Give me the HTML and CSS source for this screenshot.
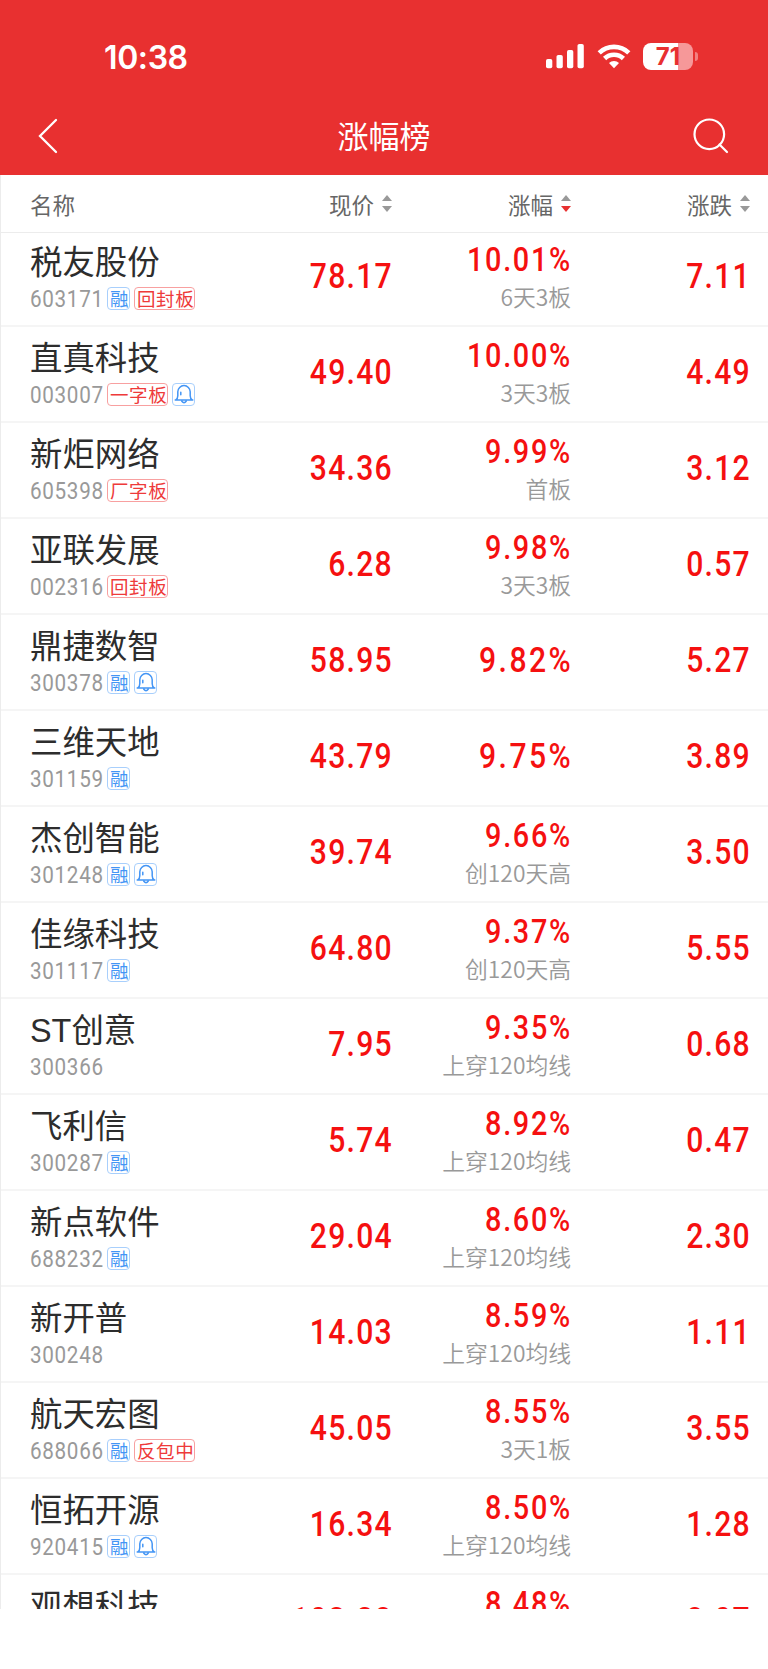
FILE: index.html
```
<!DOCTYPE html>
<html lang="zh-CN">
<head>
<meta charset="UTF-8">
<meta name="viewport" content="width=device-width, initial-scale=1.0">
<title>涨幅榜</title>
<link rel="stylesheet" href="styles.css">
</head>
<body>

<!-- Bell icon shared by the rows -->
<svg class="defs" width="0" height="0">
    <symbol id="bell" viewBox="0 0 20 20">
        <path d="M1.200 16h17.600M1.800 15.800c1.300-.8 2-2 2-4V7.800a6.200 6.200 0 0 1 12.400 0v4c0 2 .7 3.200 2 4M7.800 17.300q2.200 2.800 4.400 0M6.800 8.200v2.600" fill="none" stroke="currentColor" stroke-width="1.500" stroke-linecap="round"/>
    </symbol>
</svg>

<header>
    <div class="status-bar">
        <span class="time">10:38</span>
        <div class="status-icons">
            <svg class="signal" width="38" height="25" viewBox="0 0 38 25" fill="#fff">
                <rect x="0" y="15" width="6.300" height="9.300" rx="1.800"/>
                <rect x="10.500" y="11" width="6.300" height="13.300" rx="1.800"/>
                <rect x="21" y="6" width="6.300" height="18.300" rx="1.800"/>
                <rect x="31.500" y="0" width="6.300" height="24.300" rx="1.800"/>
            </svg>
            <svg class="wifi" width="34" height="25" viewBox="0 0 34 25" fill="none" stroke="#fff" stroke-width="4.600">
                <path d="M2.200 8.900a21.300 21.300 0 0 1 29.600 0"/>
                <path d="M7.600 14.500a13.500 13.500 0 0 1 18.800 0"/>
                <path d="M17 24.300l-5-5.200a7.200 7.200 0 0 1 10 0z" fill="#fff" stroke="none"/>
            </svg>
            <div class="battery"><span>71</span></div>
        </div>
    </div>
    <div class="title-bar">
        <svg width="20" height="36" viewBox="0 0 20 36" fill="none" stroke="#fff" stroke-width="2.300" stroke-linecap="round">
            <path d="M18 2L2 18l16 16"/>
        </svg>
        <h1>涨幅榜</h1>
        <svg width="36" height="36" viewBox="0 0 36 36" fill="none" stroke="#fff" stroke-width="2.200" stroke-linecap="round">
            <circle cx="16.300" cy="16.300" r="14.800"/>
            <path d="M26.500 26.500l7.500 7.500"/>
        </svg>
    </div>
</header>

<main class="board">
    <div class="board-head">
        <span>名称</span>
        <span class="sort">现价<i class="arrows"></i></span>
        <span class="sort">涨幅<i class="arrows down"></i></span>
        <span class="sort">涨跌<i class="arrows"></i></span>
    </div>

    <div class="row">
        <div class="stock"><div class="name">税友股份</div><div class="info"><span class="code">603171</span><span class="tag blue">融</span><span class="tag red">回封板</span></div></div>
        <div class="num">78.17</div>
        <div class="change"><div class="pct">10.01%</div><div class="note">6天3板</div></div>
        <div class="num">7.11</div>
    </div>
    <div class="row">
        <div class="stock"><div class="name">直真科技</div><div class="info"><span class="code">003007</span><span class="tag red">一字板</span><span class="tag blue"><svg class="bell"><use href="#bell"/></svg></span></div></div>
        <div class="num">49.40</div>
        <div class="change"><div class="pct">10.00%</div><div class="note">3天3板</div></div>
        <div class="num">4.49</div>
    </div>
    <div class="row">
        <div class="stock"><div class="name">新炬网络</div><div class="info"><span class="code">605398</span><span class="tag red">厂字板</span></div></div>
        <div class="num">34.36</div>
        <div class="change"><div class="pct">9.99%</div><div class="note">首板</div></div>
        <div class="num">3.12</div>
    </div>
    <div class="row">
        <div class="stock"><div class="name">亚联发展</div><div class="info"><span class="code">002316</span><span class="tag red">回封板</span></div></div>
        <div class="num">6.28</div>
        <div class="change"><div class="pct">9.98%</div><div class="note">3天3板</div></div>
        <div class="num">0.57</div>
    </div>
    <div class="row">
        <div class="stock"><div class="name">鼎捷数智</div><div class="info"><span class="code">300378</span><span class="tag blue">融</span><span class="tag blue"><svg class="bell"><use href="#bell"/></svg></span></div></div>
        <div class="num">58.95</div>
        <div class="num only">9.82%</div>
        <div class="num">5.27</div>
    </div>
    <div class="row">
        <div class="stock"><div class="name">三维天地</div><div class="info"><span class="code">301159</span><span class="tag blue">融</span></div></div>
        <div class="num">43.79</div>
        <div class="num only">9.75%</div>
        <div class="num">3.89</div>
    </div>
    <div class="row">
        <div class="stock"><div class="name">杰创智能</div><div class="info"><span class="code">301248</span><span class="tag blue">融</span><span class="tag blue"><svg class="bell"><use href="#bell"/></svg></span></div></div>
        <div class="num">39.74</div>
        <div class="change"><div class="pct">9.66%</div><div class="note">创120天高</div></div>
        <div class="num">3.50</div>
    </div>
    <div class="row">
        <div class="stock"><div class="name">佳缘科技</div><div class="info"><span class="code">301117</span><span class="tag blue">融</span></div></div>
        <div class="num">64.80</div>
        <div class="change"><div class="pct">9.37%</div><div class="note">创120天高</div></div>
        <div class="num">5.55</div>
    </div>
    <div class="row">
        <div class="stock"><div class="name">ST创意</div><div class="info"><span class="code">300366</span></div></div>
        <div class="num">7.95</div>
        <div class="change"><div class="pct">9.35%</div><div class="note">上穿120均线</div></div>
        <div class="num">0.68</div>
    </div>
    <div class="row">
        <div class="stock"><div class="name">飞利信</div><div class="info"><span class="code">300287</span><span class="tag blue">融</span></div></div>
        <div class="num">5.74</div>
        <div class="change"><div class="pct">8.92%</div><div class="note">上穿120均线</div></div>
        <div class="num">0.47</div>
    </div>
    <div class="row">
        <div class="stock"><div class="name">新点软件</div><div class="info"><span class="code">688232</span><span class="tag blue">融</span></div></div>
        <div class="num">29.04</div>
        <div class="change"><div class="pct">8.60%</div><div class="note">上穿120均线</div></div>
        <div class="num">2.30</div>
    </div>
    <div class="row">
        <div class="stock"><div class="name">新开普</div><div class="info"><span class="code">300248</span></div></div>
        <div class="num">14.03</div>
        <div class="change"><div class="pct">8.59%</div><div class="note">上穿120均线</div></div>
        <div class="num">1.11</div>
    </div>
    <div class="row">
        <div class="stock"><div class="name">航天宏图</div><div class="info"><span class="code">688066</span><span class="tag blue">融</span><span class="tag red">反包中</span></div></div>
        <div class="num">45.05</div>
        <div class="change"><div class="pct">8.55%</div><div class="note">3天1板</div></div>
        <div class="num">3.55</div>
    </div>
    <div class="row">
        <div class="stock"><div class="name">恒拓开源</div><div class="info"><span class="code">920415</span><span class="tag blue">融</span><span class="tag blue"><svg class="bell"><use href="#bell"/></svg></span></div></div>
        <div class="num">16.34</div>
        <div class="change"><div class="pct">8.50%</div><div class="note">上穿120均线</div></div>
        <div class="num">1.28</div>
    </div>
    <div class="row">
        <div class="stock"><div class="name">观想科技</div></div>
        <div class="num">103.28</div>
        <div class="change"><div class="pct">8.48%</div></div>
        <div class="num">8.07</div>
    </div>
</main>

</body>
</html>
```

FILE: styles.css
```
/* Basic Styles */
* {
    box-sizing: border-box;
}
body {
    margin: 0;
    background-color: #fff;
    font-family: "Noto Sans CJK SC", sans-serif;
    color: #2d2d2d;
}
.defs {
    display: block;
}
/* Header Styles */
header {
    height: 175px;
    background-color: #e83030;
    color: #fff;
}
.status-bar {
    display: flex;
    justify-content: space-between;
    height: 97px;
    padding: 43px 75px 0 104px;
}
.time {
    font-family: Inter, sans-serif;
    font-size: 32px;
    font-weight: 600;
    line-height: 29px;
    letter-spacing: -0.4px;
}
.status-icons {
    display: flex;
    align-items: flex-start;
}
.signal {
    margin-top: 1px;
}
.wifi {
    margin: 1px 12px 0 13px;
}
.battery {
    position: relative;
    width: 50px;
    height: 27px;
    border-radius: 8px;
    background: linear-gradient(to right, #fff 35px, #f69899 35px);
    color: #e83030;
    font-family: Inter, sans-serif;
    font-size: 24px;
    font-weight: 700;
    line-height: 27px;
    text-align: center;
}
.battery::after {
    content: "";
    position: absolute;
    top: 9px;
    right: -5px;
    width: 3px;
    height: 9px;
    border-radius: 0 4px 4px 0;
    background-color: #f28081;
}
.title-bar {
    display: flex;
    justify-content: space-between;
    align-items: center;
    height: 78px;
    padding: 0 39px 0 38px;
}
.title-bar h1 {
    margin: -3px 0 0 17px;
    font-size: 31px;
    font-weight: 400;
}
/* Board Styles */
.board {
    height: 1434px;
    border-left: 1px solid #ececec;
    overflow: hidden;
}
.board-head,
.row {
    display: grid;
    grid-template-columns: 182px 180px 179px 179px;
    padding-left: 29px;
}
.board-head {
    align-items: center;
    height: 58px;
    border-bottom: 1px solid #ececec;
    color: #666;
    font-size: 22.5px;
}
.sort {
    display: flex;
    justify-content: flex-end;
    align-items: center;
}
.arrows {
    margin-left: 8px;
}
.arrows::before,
.arrows::after {
    content: "";
    display: block;
    border: 5px solid transparent;
}
.arrows::before {
    border-top: 0;
    border-bottom: 6px solid #999;
}
.arrows::after {
    margin-top: 5px;
    border-bottom: 0;
    border-top: 6px solid #999;
}
.arrows.down::after {
    border-top-color: #e83030;
}
/* Row Styles */
.row {
    height: 96px;
    border-bottom: 2px solid #f5f5f5;
}
.board-head + .row {
    margin-top: -2px;
}
.name {
    height: 56px;
    padding-top: 10px;
    font-family: "Liberation Sans", "Noto Sans CJK SC", sans-serif;
    font-size: 32.4px;
    line-height: 44px;
    white-space: nowrap;
}
.info {
    display: flex;
    gap: 4px;
    height: 24px;
    line-height: 25px;
}
.code {
    width: 73px;
    color: #999;
    font-family: Roboto, sans-serif;
    font-size: 24px;
    letter-spacing: 0.8px;
    transform: scaleX(0.86);
    transform-origin: left;
}
.tag {
    flex: none;
    height: 23px;
    padding: 0 2px;
    border: 1px solid;
    border-radius: 4px;
    font-size: 18.5px;
    line-height: 20px;
}
.tag.blue {
    width: 23px;
    border-color: #a8cffc;
    color: #4395f5;
}
.tag.red {
    width: 61px;
    border-color: #f8a0a0;
    color: #ee3a3a;
    letter-spacing: 0.6px;
    white-space: nowrap;
}
.bell {
    display: block;
    width: 20px;
    height: 20px;
    margin-left: -1.5px;
}
.num,
.pct {
    color: #f51010;
    font-family: Roboto, sans-serif;
    font-weight: 500;
    text-align: right;
    letter-spacing: 1.5px;
    transform: scaleX(0.86);
    transform-origin: right;
}
.num {
    margin-right: -1px;
    font-size: 35px;
    line-height: 92px;
}
.num.only {
    margin-right: -2px;
    letter-spacing: 2.8px;
}
.pct {
    height: 50px;
    margin-right: -1px;
    padding-top: 7px;
    font-size: 33.5px;
    line-height: 44px;
    letter-spacing: 2px;
}
.note {
    color: #999;
    font-size: 22.8px;
    font-weight: 350;
    line-height: 31px;
    text-align: right;
}
```
